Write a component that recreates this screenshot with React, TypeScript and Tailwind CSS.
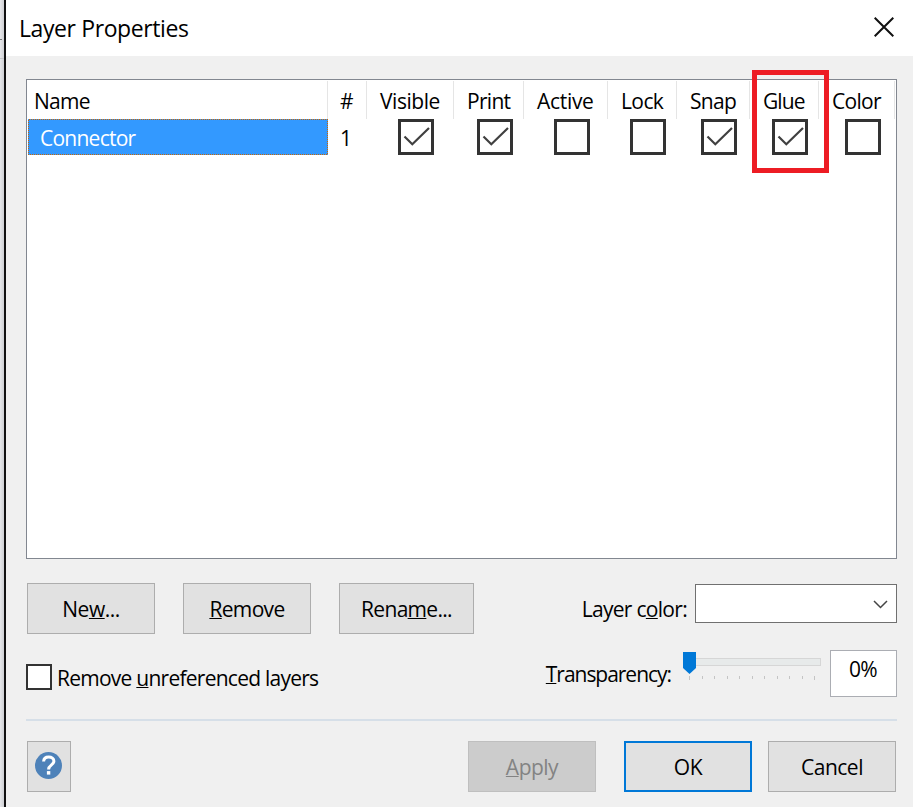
import React from 'react';

interface Column {
  label: string;
  cell: string;
  box: string;
  checked: boolean;
}

const columns: Column[] = [
  { label: 'Visible', cell: 'w-[87px] pl-[13px] tracking-[-0.45px]', box: 'w-[87px] pl-[31px]', checked: true },
  { label: 'Print', cell: 'w-[70px] pl-[13px] tracking-[-0.7px]', box: 'w-[70px] pl-[23px]', checked: true },
  { label: 'Active', cell: 'w-[84px] pl-[13px] tracking-[-0.3px]', box: 'w-[84px] pl-[30px]', checked: false },
  { label: 'Lock', cell: 'w-[69px] pl-[13px] tracking-[-0.6px]', box: 'w-[69px] pl-[22px]', checked: false },
  { label: 'Snap', cell: 'w-[73px] pl-[13px] tracking-[-0.7px]', box: 'w-[73px] pl-[24px]', checked: true },
  { label: 'Glue', cell: 'w-[69px] pl-[13px] tracking-[-0.9px]', box: 'w-[69px] pl-[22px]', checked: true },
  { label: 'Color', cell: 'w-[76px] pl-[13px] tracking-[-0.7px]', box: 'w-[76px] pl-[26px]', checked: false },
];

const ticks = [6, 19, 31, 44, 56, 69, 81, 94, 106, 119, 131];

const Key: React.FC<{ children: React.ReactNode }> = ({ children }) => (
  <span className="underline decoration-1 underline-offset-[1px] [text-decoration-skip-ink:none]">{children}</span>
);

const CheckCell: React.FC<{ checked: boolean }> = ({ checked }) => (
  <div className="w-9 h-9 border-3 border-[#333333] bg-white">
    {checked && (
      <svg width="30" height="30" viewBox="3 3 30 30" fill="none">
        <path d="M6.5 17.5 L14.3 25.2 L31 9" stroke="#404040" strokeWidth="2.2" />
      </svg>
    )}
  </div>
);

interface ButtonProps {
  className?: string;
  children: React.ReactNode;
}

const Button: React.FC<ButtonProps> = ({ className = 'w-32 border border-[#adadad] bg-[#e1e1e1] pt-px', children }) => (
  <button className={`h-[51px] shrink-0 flex items-center justify-center whitespace-pre ${className}`}>{children}</button>
);

const LayerList: React.FC = () => (
  <div className="relative h-[480px] w-[871px] border border-[#828790] bg-white">
    <div className="flex h-[39px] pt-px">
      <div className="w-[301px] border-r border-[#e5e5e5] pl-[7px] pt-[5px] tracking-[-0.7px]">Name</div>
      <div className="w-[39px] border-r border-[#e5e5e5] pl-[12px] pt-[5px]">#</div>
      {columns.map((col) => (
        <div key={col.label} className={`border-r border-[#e5e5e5] pt-[5px] whitespace-nowrap ${col.cell}`}>
          {col.label}
        </div>
      ))}
    </div>
    <div className="flex h-9 pl-px">
      <div className="w-[300px] bg-[conic-gradient(#cc6600_25%,#3399ff_0_50%,#cc6600_0_75%,#3399ff_0)] bg-size-[2px_2px] p-px">
        <div className="h-full bg-[#3399ff] pl-[11px] pt-[3px] text-white tracking-[-0.75px]">Connector</div>
      </div>
      <div className="w-[39px] pl-[12px] pt-[4px]">1</div>
      {columns.map((col) => (
        <div key={col.label} className={col.box}>
          <CheckCell checked={col.checked} />
        </div>
      ))}
    </div>
    <div className="absolute left-[725px] top-[-10px] h-[103px] w-[77px] border-5 border-[#ed1c24]" />
  </div>
);

const TransparencySlider: React.FC = () => (
  <svg width="140" height="32" viewBox="0 0 140 32" shapeRendering="crispEdges">
    <rect x="0.5" y="6.5" width="137" height="7" fill="#e7eaea" stroke="#d6d6d6" />
    <path d="M0 0 H13 V16 L6.5 22 L0 16 Z" fill="#0078d7" shapeRendering="auto" />
    {ticks.map((x, i) => (
      <rect key={x} x={x} y="24" width="1" height={i === 0 || i === ticks.length - 1 ? 4 : 3} fill="#c4c4c4" />
    ))}
  </svg>
);

export default function App() {
  return (
    <div className="flex h-[807px] w-[913px] overflow-hidden bg-[#f0f0f0] font-['Open_Sans','Noto_Sans',sans-serif] text-[21px] leading-[30px] text-black">
      <div className="w-1 shrink-0 bg-linear-to-r from-[#e6e7ea] to-[#cfd0d4]">
        <div className="mt-[39px] h-px w-[2px] bg-[#777777]" />
        <div className="mt-[18px] h-px bg-[#c4c5c8]" />
      </div>
      <div className="w-0.5 shrink-0 bg-[#111111]" />
      <div className="flex flex-1 flex-col">
        <div className="flex h-14 items-start justify-between bg-white pl-[13px] pr-[19px]">
          <h1 className="pt-[13px] text-[23px] tracking-[-0.4px]">Layer Properties</h1>
          <svg className="mt-[17px]" width="20" height="20" viewBox="0 0 20 20" fill="none">
            <path d="M0.7 0.7 L19.3 19.3 M19.3 0.7 L0.7 19.3" stroke="#111111" strokeWidth="2" />
          </svg>
        </div>

        <div className="flex flex-col pl-5 pt-[23px]">
          <LayerList />

          <div className="flex pl-px pt-6">
            <Button>
              <span className="tracking-[-0.5px]">Ne<Key>w</Key>...</span>
            </Button>
            <div className="w-7" />
            <Button>
              <span className="tracking-[-0.65px]"><Key>R</Key>emove</span>
            </Button>
            <div className="w-7" />
            <Button className="w-[135px] border border-[#adadad] bg-[#e1e1e1] pt-px">
              <span className="tracking-[-0.7px]">Rena<Key>m</Key>e...</span>
            </Button>
            <div className="w-[221px] pr-[8px] pt-[11px] text-right tracking-[-0.7px]">
              Layer c<Key>o</Key>lor:
            </div>
            <div className="mt-px flex h-[39px] w-[202px] justify-end border border-[#707070] bg-white pr-[8px] pt-[15px]">
              <svg width="15" height="9" viewBox="0 0 15 9" fill="none">
                <path d="M1 1 L7.5 7.5 L14 1" stroke="#444444" strokeWidth="1.5" />
              </svg>
            </div>
          </div>

          <div className="flex h-[63px] w-[871px] pt-4">
            <div className="mt-[14px] h-[26px] w-[26px] border-2 border-[#333333] bg-white" />
            <div className="w-[300px] pl-[5px] pt-[13px] whitespace-nowrap tracking-[-0.75px]">
              Remove <Key>u</Key>nreferenced layers
            </div>
            <div className="w-[320px] pr-px pt-[9px] text-right tracking-[-1.03px]">
              <Key>T</Key>ransparency:
            </div>
            <div className="w-[158px] pl-[11px] pt-0.5">
              <TransparencySlider />
            </div>
            <div className="h-[47px] w-[67px] shrink-0 border border-[#abadb3] bg-white pt-[3px] pr-px text-center tracking-[-0.7px]">0%</div>
          </div>

          <div className="mt-[22px] h-0.5 w-[871px] bg-[#d6dfe8]" />

          <div className="flex w-[870px] pl-px pt-5">
            <Button className="w-11 border border-[#adadad] bg-[#e1e1e1] pb-px">
              <svg width="28" height="28" viewBox="0 0.5 28 28" fill="none">
                <circle cx="13.5" cy="14" r="13.5" fill="#4e82b9" />
                <path d="M8.6 10 C8.8 6.8 11 5.6 13.7 5.6 C16.7 5.6 18.9 7.2 18.9 9.8 C18.9 13.4 13.6 13.4 13.6 17.9" stroke="white" strokeWidth="3" />
                <rect x="11.9" y="19.6" width="3.4" height="3.5" fill="white" />
              </svg>
            </Button>
            <div className="flex-1" />
            <Button className="mr-7 w-32 border border-[#bfbfbf] bg-[#cccccc] pt-px text-[#838383]">
              <span className="tracking-[-0.5px]"><Key>A</Key>pply</span>
            </Button>
            <Button className="mr-4 w-32 border-2 border-[#0078d7] bg-[#e1e1e1] pt-px">
              <span className="tracking-[-0.4px]">OK</span>
            </Button>
            <Button>
              <span className="tracking-[-0.5px]">Cancel</span>
            </Button>
          </div>
        </div>
      </div>
    </div>
  );
}
